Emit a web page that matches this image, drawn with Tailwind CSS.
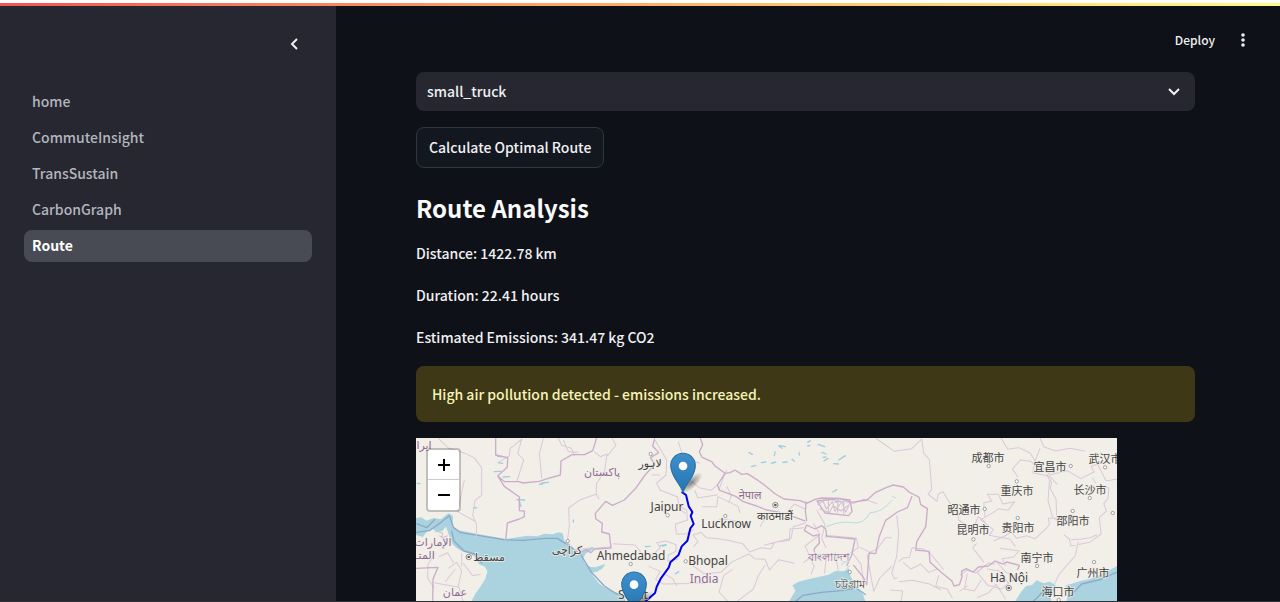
<!DOCTYPE html>
<html lang="en">
<head>
<meta charset="utf-8">
<meta name="viewport" content="width=device-width, initial-scale=1">
<title>Route</title>
<script src="https://cdn.jsdelivr.net/npm/@tailwindcss/browser@4"></script>
</head>
<body class="flex h-screen flex-col overflow-hidden border-b border-[#30323a] bg-[#0e1117] font-['Noto_Sans_CJK_SC',sans-serif] text-sm font-medium text-[#f0f0f2]">
<div class="h-[3px] shrink-0 bg-white"></div>
<div class="h-[3px] shrink-0 bg-linear-to-r from-[#f2544f] to-[#fffd80]"></div>
<div class="flex min-h-0 grow">
  <aside class="w-[336px] shrink-0 bg-[#262730] px-6 pt-6">
    <div class="flex justify-end pr-1">
      <button type="button" aria-label="Collapse sidebar" class="flex size-7 items-center justify-center">
        <svg viewBox="0 0 20 20" class="size-5" fill="none" stroke="currentColor" stroke-width="2"><path d="M13 5 8 10l5 5"/></svg>
      </button>
    </div>
    <nav class="mt-7 flex flex-col gap-1 text-[#b4b5be]" aria-label="Pages">
      <a href="#home" class="flex h-8 items-center rounded-lg px-2 pb-[2px]">home</a>
      <a href="#commute" class="flex h-8 items-center rounded-lg px-2 pb-[2px]">CommuteInsight</a>
      <a href="#trans" class="flex h-8 items-center rounded-lg px-2 pb-[2px]">TransSustain</a>
      <a href="#carbon" class="flex h-8 items-center rounded-lg px-2 pb-[2px]">CarbonGraph</a>
      <a href="#route" aria-current="page" class="flex h-8 items-center rounded-lg bg-[#484a54] px-2 pb-[2px] font-bold text-white">Route</a>
    </nav>
  </aside>
  <div class="flex min-w-0 grow flex-col">
    <header class="flex h-[66px] shrink-0 items-start justify-end gap-[18px] pt-5 pr-[27px]">
      <button type="button" class="flex h-7 items-center text-xs">Deploy</button>
      <button type="button" aria-label="Menu" class="flex h-7 w-5 items-center justify-center">
        <svg viewBox="0 0 20 20" class="size-5 shrink-0" fill="currentColor"><circle cx="10" cy="5" r="1.8"/><circle cx="10" cy="10" r="1.8"/><circle cx="10" cy="15" r="1.8"/></svg>
      </button>
    </header>
    <main class="flex min-h-0 grow flex-col items-start gap-4 overflow-hidden pr-[85px] pl-20">
      <div class="relative w-full shrink-0">
        <select aria-label="Vehicle type" class="block h-[39px] w-full appearance-none rounded-lg bg-[#262730] px-[11px] pb-[2px]"><option>small_truck</option></select>
        <svg viewBox="0 0 20 20" class="pointer-events-none absolute top-[9px] right-[11px] size-5" fill="none" stroke="currentColor" stroke-width="2"><path d="m5 8 5 5 5-5"/></svg>
      </div>
      <button type="button" class="h-[41px] shrink-0 rounded-lg border border-[#34363f] bg-[#131720] px-3 pb-[2px]">Calculate Optimal Route</button>
      <h2 class="pt-2 text-2xl leading-8 font-bold text-[#fafafa]">Route Analysis</h2>
      <p class="leading-[26px]">Distance: 1422.78 km</p>
      <p class="leading-[26px]">Duration: 22.41 hours</p>
      <p class="leading-[26px]">Estimated Emissions: 341.47 kg CO2</p>
      <div role="alert" class="w-full shrink-0 rounded-lg bg-[#3e3816] p-4 leading-6 text-[#f6f4b8]">High air pollution detected - emissions increased.</div>
      <div class="relative w-[90%] shrink-0 overflow-hidden bg-[#f2efe9]">
        <svg viewBox="0 0 701 164" class="block w-full" role="img" aria-label="Route map of India">
          <defs>
            <linearGradient id="pin" x2="0" y2="1"><stop stop-color="#3e8fcc"/><stop offset="1" stop-color="#2575b2"/></linearGradient>
            <radialGradient id="shade"><stop stop-color="#000" stop-opacity=".45"/><stop offset="1" stop-color="#000" stop-opacity="0"/></radialGradient>
            <g id="marker">
              <ellipse cx="24" cy="-28" rx="44" ry="17" transform="rotate(-42 24 -28)" fill="url(#shade)"/>
              <path d="M0 0C-8-26-37-47-37-80a37 37 0 0 1 74 0C37-47 8-26 0 0Z" fill="url(#pin)" stroke="#2b6f9f" stroke-width="3"/>
              <circle cy="-79" r="13" fill="#fff"/>
            </g>
          </defs>
          <!-- Terrain, drawn at three units per pixel -->
          <g transform="scale(.33333) translate(-18 -24)" fill="none" stroke-linejoin="round">
            <g fill="#aad3df">
              <path d="M18 264 34 262 49 272 72 264 93 268 116 249 129 258 128 288 141 300 205 312 287 327 322 322 352 317 382 319 403 311 427 313 445 307 458 310 463 334 480 342 492 362 505 374 521 360 545 351 556 354 528 370 520 383 524 399 541 411 556 412 585 402 579 414 560 426 543 427 551 440 566 459 580 470 606 482 636 494 650 516H183L195 493 211 470 226 446 232 424 225 411 207 403 193 379 175 369 154 363 137 352 127 342 117 316 108 290 96 303 77 307 69 296 51 304 39 321 18 315Z"/>
              <path d="M1136 516 1156 482 1147 466 1166 455 1200 446 1225 441 1256 434 1276 423 1301 424 1316 415 1322 440 1335 460 1350 484 1360 495 1366 516Z"/>
              <path d="M1814 516 1833 486 1848 468 1866 465 1880 451 1900 460 1920 455 1937 466 1930 483 1922 500 1924 516H1970L1973 483 1967 466 1990 460 2010 453 2040 447 2061 438 2092 424 2121 408V516Z"/>
            </g>
            <g stroke="#9bcfdd" stroke-width="4" stroke-linecap="round">
              <path d="m265 98 13 2m-25 25 20-1m-10-45 14 1m2 61 19-1m23 69 23 1m-17 0 6 20m62-71 20-2m-27 6 10-1M190 234l10-1M22 160l8 1M490 270v6M750 347l18-2m-62 5 14-1m390-302 16 3m-20-3 10 8"/>
              <path d="m1017 68 10 5m27 25 13-2m17 4 13-4m-2-30-2 11m25 20 13-1m15-8 7 6m14-26 1 7m25-38 8-5m-8 16 6-2m25-3 20 7m-8 17 12 5m-9 10 8-1m-5 12 12-8m32 5 20-13m-35 24 14 1m-261 8 13-4M1268 186l12-7m-5 37 16-2M758 348l10-3m29 86 9-6"/>
              <path d="M1249 290q41-18 77-12t54-30q35 0 65-36M1250 312l-3 12M1295 405l8-10m7 20 10-8m-21-12 13 1M1690 342l5 5m-248-148 10 5m590-60 10 15" stroke-width="2"/>
            </g>
            <!-- Maritime limits -->
            <g stroke="#8ba9c6" stroke-width="4">
              <path d="m18 307 40-5 35-25 25-20 12 35 22 16 130 21 55 2 70-6 35 0 41 26 30 24 30 50 40 43 32 21 32 12M20 281l30 12 25-25m50 34 6 30 31 31 31 9 23 28M1154 516l25-20 55-9 60-5 44-8 29 20M1868 516l30-30 20-4m57 20 40-40 55-13 51-23"/>
            </g>
            <!-- Provincial boundaries -->
            <g stroke="#dac8d9" stroke-width="3">
              <path d="m85 25 30 29 45 14 32 15 23 30v83l-20 15-7 45 11 24v40M163 150l-20 95 51 28M263 98l35-20 2-22 36-29M336 25l-13 45 18 20-20 63M400 25l-12 46 7 73M445 25l10 21 29 9 10 23M553 65l18 15 20-8-7 50-25 40v30l-48 17-35 25 2 53-9 69M606 25l12 20-26 33M460 30l15 35 30 2M490 360l50-6M556 355l49-5M609 341l66 4 20 25 35 3M558 190l9 18"/>
              <path d="m735 30 35 60-2 45-28 24 10 21 53 21 5 35 18 14M725 135l25 0m55-100 15 50 50 15M810 230l20 10 2 30-36 13 3 29 30 0 21-14M833 145l35 28 35 8 21-18M854 180l9 24 60-10M727 375l24-22-11-15 28-5 30 11 0 20-22 10-3 19 32-6M850 350l14-15-15-20 24-8 16 16 37 3 34 6 38 9 21 25 34-13 30 4 11-20 44-6 2-34 43-4M716 409l35 15-14 24 23 14 130-2M846 405l35 26 52-4 30-30 53-25 18 14 31 2 13 32 28-31 48 11M955 516l-28-30 14-50 27-18M1065 405l-20 32-15 40-51 39M1050 290l18-30 61-12 24-26 33 15M1188 278l-38 12-7 35-81 21M1220 240l25 44-10 40 13 30M1210 280l20 34-45 34 12 25 41 10M1245 316l94 8 6 29-26 18M1243 430l8-62M1286 430l-11-65M1325 365l28 38 9 65M1350 352l30 15 22-11 24-33 19 0M1371 374l20 110 18-40 36-35M1235 205l97 15 30-13 40 14"/>
              <path d="m875 230 45 0 4-30 60 29 6 20m-40-80 14 28-8 20m-30 50 49 5 20 25M950 120l-12 28-12 33M760 430l28 16 13 22M1180 398l20-14 12 24-9 26"/>
              <path d="m1398 25 55 39 52-8 30-29 6 43 17 18 7 91-11 13 27 22 4-22 14-7 24 40 19 13 4 32 20 15 26 3 13-28 21 17M1460 256l6 53-6 70-15 50 7 17 11-3M1466 394l14-10 18-2 8-29 31 3 23 13 41 51M1479 397l24 20 29-15 24 25 26-10M1466 455l40-4 50 10 37 19M1700 340l-12 14 34 43M1725 260l-4-42 24-5-13-20 33 0 13 29 36-7-20 26-28-5-17 12-37 21 38 30-13 17 62 11 17 22M1751 333l33-15 20-12 16 19 30-8 25 9 35-32 8-10-3-19 25-1-2-56-18-34 5-16-14-21 11-14-39-12-21-17-31-4-24 27 17 25M1773 25l20 33 34-5 33 16 21 33M1890 25l12 26 35 12 43-8 45 9M1890 55l-16 41-6 32 50 11 24 24M1918 135l54-13 40 24 40-20-9-17 20-6 25 50 33-6M1918 152l-4 60 14 52 36 18 31-14M2080 170l16 3-2 32-13 16 8 22-21 19 5 50-34 25-57 11-4-21-17-13M1982 329l33-2 25-4 21-9M2005 335l-10 43-48 55-14 30M1770 355l58 8-18 18-34 5 12 22M1650 436l20-15 28 8 37-30 20 4M1672 430l-9 47 30 6 21-33M1702 427l31 39 41 11 22-18M1731 417l35 5 30 38 28-17-35-16-27-28M1648 484l25-17M1586 436l-9 33 34 8 16 28M1701 503l35-15 22-25 29 45M1440 480l38 3-6 33"/>
              <path d="m75 370-21 33-1 42 20 28M115 415l25-18 15 26-11 48M160 400l28 37 24-4M73 458l74 14 12 42M105 456l31-39M155 370l0 40M87 380l26-12 17 30"/>
            </g>
            <!-- National boundaries -->
            <g stroke="#cbadc9" stroke-width="4">
              <path d="M257 25v50l36 8-1 28-29 27 20 31 45 32v41l15 1v17l-15 7-36 12-5 52M263 138l21 17 43 0 12 4 48-5 25-8 39-11 2-42 33-19 38 0 24-12 12-39M735 103l-30 32-28 40-34 35-36 16-20-12-31 36 1 16 20 14-2 26 23 6 5 42-49 3-12 11-14-9-25 10M735 103l-14-20 25-15-18-20 6-23M18 415l66-3-15 35-1 65"/>
              <path d="M871 25 878 45 868 65 876 82 905 95 915 108 945 130 960 128 975 120 995 133 1012 131 1045 152 1062 164 1096 192 1122 207 1170 212 1190 220 1215 208 1235 204 1290 205 1325 217 1371 210 1395 188 1430 172 1450 165 1480 171 1498 187 1515 195 1527 202 1532 224 1552 236 1547 290 1520 335 1517 360 1557 364 1560 397 1595 428 1625 452 1632 468 1648 464 1656 440 1654 424 1668 416 1690 426 1705 411 1735 408 1755 393 1780 402 1790 396 1828 406 1822 420"/>
              <path d="M945 130 922 165 928 180 977 199 1000 215 1040 228 1070 240 1110 247 1140 256 1186 273M1188 214l-2 30 4 29M1190 285l-7 16 26 17 17-4 2 25-16 18 4 27 30-2 14-5M1190 285l25 12 20-10 12 10 3 22 85 8-10 48-15 33M1330 405l30 37 10 22 7-95 20 2M1397 371l10-50 20-50 35-25 30-13 14-35M1222 213l65-7 33 4 6 35-11 12-70-8-24-36Z"/>
            </g>
            <path d="m1223 225 16-12 10 24 18-22 8 29 20-29 12 32 14-32M1228 236l30 12 11-21 24 16 20-16M1255 209v40m28-39v38m18-38v43" stroke="#d4bdd2" stroke-width="3"/>
            <path d="M85 305l13 5-3 14 18-7M88 317l21 14" stroke="#d4bdd2" stroke-width="3"/>
            <!-- Driving route -->
            <path d="m817 187 11 8 8 34 11 17-5 12 9 24-10 13-9 37-17 17-10 27-24 21-5 16-24 33-12 24-5 19-40 35" stroke="#00e" stroke-width="6" stroke-linecap="round"/>
            <!-- Towns and capitals -->
            <g fill="#fff" stroke="#777" stroke-width="2">
              <circle cx="473" cy="333" r="5"/><circle cx="662" cy="402" r="5"/><circle cx="722" cy="72" r="5"/><circle cx="773" cy="256" r="5"/><circle cx="946" cy="258" r="5"/><circle cx="827" cy="394" r="5"/><circle cx="1319" cy="426" r="5"/>
              <circle cx="1736" cy="108" r="5"/><circle cx="1982" cy="108" r="5"/><circle cx="2085" cy="112" r="5"/><circle cx="1820" cy="154" r="5"/><circle cx="2039" cy="204" r="5"/><circle cx="1724" cy="237" r="5"/><circle cx="1823" cy="264" r="5"/><circle cx="1988" cy="243" r="5"/><circle cx="1690" cy="328" r="5"/><circle cx="2108" cy="249" r="5"/><circle cx="1881" cy="408" r="5"/><circle cx="2052" cy="396" r="5"/><circle cx="1946" cy="510" r="5"/>
              <g stroke="#555"><circle cx="176" cy="381" r="8"/><circle cx="1096" cy="225" r="8"/><circle cx="1796" cy="474" r="8"/></g>
              <g fill="#555" stroke="none"><circle cx="176" cy="381" r="4"/><circle cx="1096" cy="225" r="4"/><circle cx="1796" cy="474" r="4"/></g>
            </g>
          </g>
          <!-- Place names -->
          <g class="font-['Noto_Sans','Noto_Sans_CJK_SC','DejaVu_Sans',sans-serif] text-xs font-normal" fill="#444" stroke="#f2efe9" stroke-width="2" stroke-opacity=".7" paint-order="stroke" text-anchor="middle">
            <text x="251" y="73">Jaipur</text>
            <text x="310" y="90">Lucknow</text>
            <text x="215" y="122">Ahmedabad</text>
            <text x="292" y="127">Bhopal</text>
            <text x="217" y="161">Surat</text>
            <text x="593" y="144">Hà Nội</text>
            <text x="234" y="29" class="text-[11px]">لاہور</text>
            <text x="151" y="116" class="text-[11px]">کراچی</text>
            <text x="73" y="123" class="text-[11px]">مسقط</text>
            <text x="359" y="82" class="text-[11px]">काठमाडौं</text>
            <text x="434" y="150" class="text-[11px]">চট্টগ্রাম</text>
            <g fill="#8d6b93">
              <text x="288" y="145">India</text>
              <text x="186" y="38" class="text-[11px]">پاکستان</text>
              <text x="8" y="11" class="text-[11px]">ایرا</text>
              <text x="17" y="108" class="text-[11px]">الإمارات</text>
              <text x="9" y="121" class="text-[11px]">المتـ</text>
              <text x="39" y="158" class="text-[11px]">عمان</text>
              <text x="334" y="61" class="text-[11px]">नेपाल</text>
              <text x="413" y="123" class="text-[11px]">বাংলাদেশ</text>
            </g>
            <g class="text-[11px]">
              <text x="572" y="24">成都市</text><text x="634" y="33">宜昌市</text><text x="689" y="25">武汉市</text>
              <text x="601" y="57">重庆市</text><text x="674" y="56">长沙市</text><text x="548" y="76">昭通市</text>
              <text x="557" y="96">昆明市</text><text x="602" y="94">贵阳市</text><text x="657" y="87">邵阳市</text>
              <text x="621" y="124">南宁市</text><text x="677" y="139">广州市</text><text x="642" y="158">海口市</text>
            </g>
          </g>
          <g transform="scale(.33333) translate(-18 -24)">
            <use href="#marker" x="819" y="187"/>
            <use href="#marker" x="672" y="543"/>
          </g>
        </svg>
        <div class="absolute top-[10px] left-[10px] flex w-[35px] flex-col rounded-sm border-2 border-black/20 bg-white bg-clip-padding text-black">
          <button type="button" aria-label="Zoom in" class="flex h-[30px] items-center justify-center border-b border-[#ccc]"><svg viewBox="0 0 12 12" class="size-3" stroke="currentColor" stroke-width="2"><path d="M0 6h12M6 0v12"/></svg></button>
          <button type="button" aria-label="Zoom out" class="flex h-[30px] items-center justify-center"><svg viewBox="0 0 12 12" class="size-3" stroke="currentColor" stroke-width="2"><path d="M0 6h12"/></svg></button>
        </div>
      </div>
    </main>
  </div>
</div>
</body>
</html>
